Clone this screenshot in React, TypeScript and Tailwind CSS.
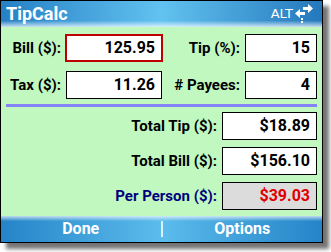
import React from "react";

const font = { fontFamily: 'Roboto, "Liberation Sans", sans-serif' };

function Field({ value, w, focus, grey, red }: { value: string; w: string; focus?: boolean; grey?: boolean; red?: boolean }) {
  return (
    <div
      className={`${w} h-[28px] flex items-center justify-end pr-[6px] text-[16px] font-bold whitespace-nowrap ${
        focus ? "border-2 border-[#c00000]" : "border border-black"
      } ${grey ? "bg-[#dcdcdc]" : "bg-white"} ${red ? "text-[#e00000]" : "text-black"}`}
    >
      {value}
    </div>
  );
}

function AltIcon() {
  return (
    <svg width="18" height="20" viewBox="0 0 18 20" fill="white">
      <path d="M8 3h5V0l5 4.5-5 4.5V6H8z" />
      <path d="M10 8H5V5L0 9.5 5 14v-3h5z" />
      <rect x="6" y="14" width="2" height="2" />
      <rect x="6" y="17" width="2" height="2" />
    </svg>
  );
}

export default function App() {
  return (
    <div className="w-[331px] h-[252px] bg-white" style={font}>
      <div className="w-[323px] h-[243px] border border-black flex flex-col shadow-[6px_6px_4px_rgba(0,0,0,0.55)]">
        <div className="h-[26px] flex items-center justify-between px-[5px] bg-[linear-gradient(to_bottom,transparent_75%,rgba(255,255,255,0.75)),linear-gradient(to_right,#2680c4,#62c2f0_50%,#2478bc)]">
          <span className="text-white font-bold text-[18px] leading-none">TipCalc</span>
          <div className="flex items-center gap-[2px] pr-[4px]">
            <span className="text-white text-[13px]" style={{ fontFamily: '"DejaVu Sans", sans-serif' }}>ALT</span>
            <AltIcon />
          </div>
        </div>

        <div className="flex-1 bg-[#c0f8c0] flex flex-col pt-[7px] text-[15px] font-bold whitespace-nowrap">
          <div className="flex items-center h-[28px]">
            <span className="w-[60px] text-right text-black">Bill ($):</span>
            <div className="ml-[4px]">
              <Field value="125.95" w="w-[98px]" focus />
            </div>
            <span className="w-[77px] text-right text-black">Tip (%):</span>
            <div className="ml-[5px]">
              <Field value="15" w="w-[72px]" />
            </div>
          </div>
          <div className="flex items-center h-[28px] mt-[9px]">
            <span className="w-[60px] text-right text-black">Tax ($):</span>
            <div className="ml-[5px]">
              <Field value="11.26" w="w-[96px]" />
            </div>
            <span className="w-[78px] text-right text-black"># Payees:</span>
            <div className="ml-[5px]">
              <Field value="4" w="w-[72px]" />
            </div>
          </div>
          <div className="ml-[5px] mt-[5px] w-[311px] h-[3px] bg-[#8484f8]" />
          <div className="flex flex-col items-end pr-[5px] mt-[5px] gap-[7px]">
            <div className="flex items-center gap-[5px]">
              <span className="text-black">Total Tip ($):</span>
              <Field value="$18.89" w="w-[95px]" />
            </div>
            <div className="flex items-center gap-[5px]">
              <span className="text-black">Total Bill ($):</span>
              <Field value="$156.10" w="w-[95px]" />
            </div>
            <div className="flex items-center gap-[5px]">
              <span className="text-[#00007c]">Per Person ($):</span>
              <Field value="$39.03" w="w-[95px]" grey red />
            </div>
          </div>
        </div>

        <div className="h-[26px] flex items-center bg-[linear-gradient(to_bottom,rgba(255,255,255,0.7),transparent_20%),linear-gradient(to_right,#2484c8,#5cbcec_50%,#2484c8)]">
          <span className="flex-1 text-center text-white font-bold text-[16px]">Done</span>
          <div className="w-[2px] h-[16px] bg-[#d8f0ff]" />
          <span className="flex-1 text-center text-white font-bold text-[16px]">Options</span>
        </div>
      </div>
    </div>
  );
}
